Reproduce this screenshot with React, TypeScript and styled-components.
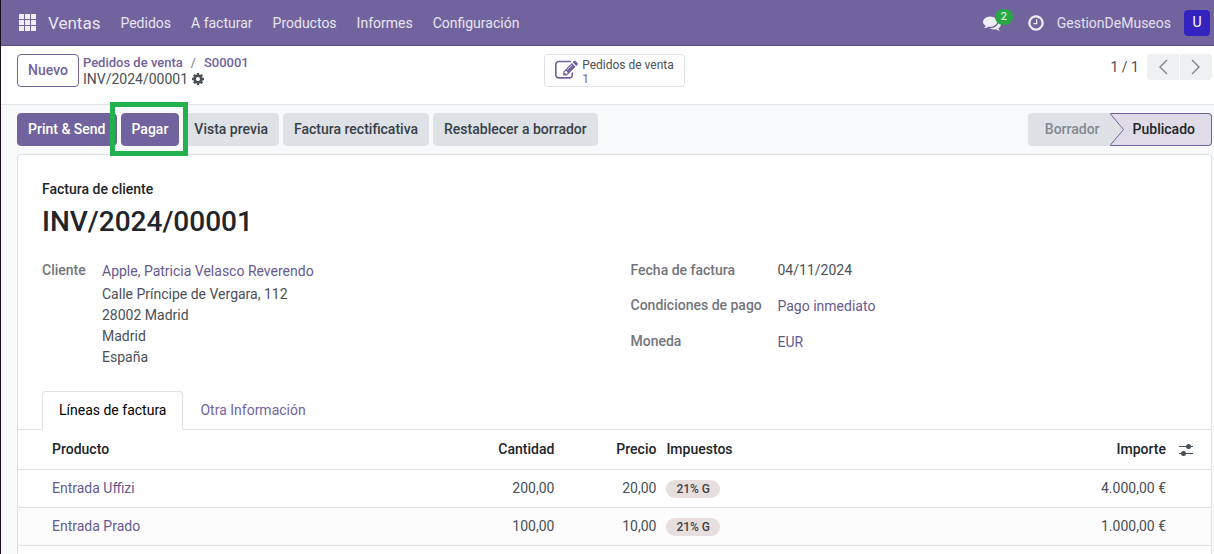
import React from "react";
import styled, { createGlobalStyle, css } from "styled-components";

const color = {
  brand: "#71639e",
  brandDark: "#5a4f7f",
  fieldLink: "#66598f",
  line: "#dee2e6",
  muted: "#f8f9fa",
  text: "#495057",
  strong: "#212529",
  label: "#73767b",
};

const GlobalStyle = createGlobalStyle`
  *, *::before, *::after { box-sizing: border-box; }
  html, body { height: 100%; }
  body {
    margin: 0;
    background: ${color.muted};
    color: ${color.text};
    font: 14px/21px Roboto, "Liberation Sans", sans-serif;
    overflow: hidden;
  }
  button { font: inherit; cursor: pointer; }
  a { color: ${color.brand}; text-decoration: none; }
`;

const Page = styled.div`
  min-height: 100vh;
  display: flex;
  flex-direction: column;
  border-left: 1px solid #1b0f1e;
`;

const Navbar = styled.header`
  display: flex;
  align-items: center;
  height: 46px;
  padding: 0 4px 0 18px;
  background: ${color.brand};
  border-bottom: 1px solid ${color.brandDark};
`;

const IconButton = styled.button`
  display: flex;
  padding: 0;
  border: 0;
  background: none;
  color: inherit;
`;

const Menu = styled.nav`
  display: flex;
  align-items: center;
  gap: 20px;
  margin-left: 12px;
  padding-top: 2px;
`;

const MenuLink = styled.a<{ $brand?: boolean }>`
  color: #e9e6f0;
  ${(p) => p.$brand && css`font-size: 17px;`}
`;

const Systray = styled.div`
  display: flex;
  align-items: center;
  margin-left: auto;
  color: #f0eef5;
`;

const Messages = styled(IconButton)`
  position: relative;
  margin-right: 26px;
`;

const Badge = styled.span`
  position: absolute;
  left: 12px;
  top: -5px;
  min-width: 18px;
  padding: 0 6px;
  border-radius: 8px;
  background: #28a745;
  color: #fff;
  font-size: 11px;
  line-height: 16px;
`;

const UserName = styled.span`
  margin: 0 13px 0 12px;
  padding-top: 2px;
  color: #e3e0ec;
`;

const Avatar = styled.button`
  width: 26px;
  height: 26px;
  padding: 0;
  border: 0;
  border-radius: 4px;
  background: #3324c0;
  color: #fff;
`;

const ControlPanel = styled.div`
  display: grid;
  grid-template-columns: 1fr auto 1fr;
  align-items: start;
  height: 59px;
  padding: 8px 2px 0 16px;
  background: #fff;
  border-bottom: 1px solid ${color.line};
`;

const Crumbs = styled.div`
  display: flex;
  gap: 4px;
`;

const Button = styled.button<{ $kind?: "primary" | "outline" }>`
  position: relative;
  height: 33px;
  padding: 0 10px;
  border: 1px solid ${color.line};
  border-radius: 4px;
  background: ${color.line};
  color: #374047;
  font-weight: 500;
  white-space: nowrap;
  ${(p) =>
    p.$kind === "primary" &&
    css`
      border-color: ${color.brand};
      background: ${color.brand};
      color: #fff;
    `}
  ${(p) =>
    p.$kind === "outline" &&
    css`
      border-color: ${color.brand};
      background: #fff;
      color: ${color.brand};
    `}
`;

const Trail = styled.nav`
  padding-top: 1px;
  line-height: 16px;
`;

const TrailPath = styled.div`
  display: flex;
  gap: 8px;
  font-size: 13px;
  font-weight: 500;
  color: #868c92;
`;

const TrailCurrent = styled.div`
  display: flex;
  align-items: center;
  gap: 3px;
  color: ${color.text};
`;

const StatButton = styled.button`
  display: flex;
  align-items: center;
  gap: 4px;
  height: 33px;
  padding: 0 10px;
  border: 1px solid ${color.line};
  border-radius: 4px;
  background: #fff;
  color: ${color.brand};
  font-size: 12px;
  line-height: 14px;
  text-align: left;
`;

const StatText = styled.span`
  padding-top: 2px;
`;

const StatLabel = styled.span`
  display: block;
  color: ${color.text};
`;

const StatValue = styled.span`
  display: block;
`;

const Pager = styled.div`
  display: flex;
  align-items: center;
  justify-content: flex-end;
  gap: 1px;
`;

const PagerCount = styled.span`
  margin-right: 7px;
`;

const PagerButton = styled.button<{ $side: "left" | "right" }>`
  display: flex;
  align-items: center;
  justify-content: center;
  width: 32px;
  height: 26px;
  padding: 0;
  border: 0;
  border-radius: ${(p) => (p.$side === "left" ? "4px 0 0 4px" : "0 4px 4px 0")};
  background: #eef0f1;
  color: #7c8186;
`;

const StatusBar = styled.div`
  display: flex;
  gap: 4px;
  padding: 8px 2px 8px 16px;
`;

const HighlightFrame = styled.span`
  position: absolute;
  z-index: 1;
  inset: -12px -10px -11px -12px;
  border: 5px solid #22b14c;
  pointer-events: none;
`;

const Steps = styled.div`
  display: flex;
  margin-left: auto;
`;

const Step = styled.button<{ $current?: boolean }>`
  position: relative;
  height: 33px;
  padding: 0 10px 0 16px;
  border: 1px solid ${color.line};
  border-right: 0;
  border-radius: 4px 0 0 4px;
  background: ${color.line};
  color: #83888e;
  font-weight: 500;
  ${(p) =>
    p.$current &&
    css`
      padding: 0 16px 0 23px;
      border: 1px solid ${color.brand};
      border-left: 0;
      border-radius: 0 4px 4px 0;
      background: #dfdbe8;
      color: ${color.strong};
    `}
`;

const StepArrow = styled.svg`
  position: absolute;
  left: 0;
  top: -1px;
`;

const Sheet = styled.main`
  flex: 1;
  margin: 0 2px 0 16px;
  padding-top: 24px;
  border: 1px solid ${color.line};
  border-bottom: 0;
  border-radius: 4px 4px 0 0;
  background: #fff;
`;

const SheetHead = styled.div`
  padding: 0 24px;
  color: ${color.strong};
  font-weight: 500;
`;

const Title = styled.h1`
  margin: 5px 0 21px;
  font-size: 28px;
  line-height: 34px;
  font-weight: 500;
`;

const Groups = styled.div`
  display: grid;
  grid-template-columns: 1fr 1fr;
  gap: 32px;
  height: 131px;
  padding: 0 24px;
`;

const Fields = styled.dl<{ $label: number }>`
  display: grid;
  grid-template-columns: ${(p) => p.$label}px 1fr;
  align-content: start;
  row-gap: 14px;
  margin: 0;
  a { color: ${color.fieldLink}; }
`;

const Label = styled.dt`
  color: ${color.label};
  font-weight: 500;
`;

const Value = styled.dd<{ $link?: boolean }>`
  margin: 0;
  ${(p) => p.$link && css`padding-top: 1px;`}
`;

const Address = styled.address`
  margin-top: 2px;
  font-style: normal;
`;

const Tabs = styled.div`
  display: flex;
  padding: 0 24px;
  border-bottom: 1px solid ${color.line};
`;

const Tab = styled.button<{ $active?: boolean }>`
  height: 39px;
  margin-bottom: -1px;
  padding: 0 16px;
  border: 1px solid transparent;
  border-radius: 4px 4px 0 0;
  background: none;
  color: ${color.brand};
  ${(p) =>
    p.$active &&
    css`
      border-color: ${color.line} ${color.line} #fff;
      background: #fff;
      color: #000;
    `}
`;

const Lines = styled.table`
  width: 100%;
  table-layout: fixed;
  border-collapse: separate;
  border-spacing: 0;
  a { color: ${color.fieldLink}; }
`;

const Column = styled.col<{ $width?: string }>`
  width: ${(p) => p.$width ?? "auto"};
`;

const cell = css<{ $end?: boolean }>`
  padding: 0 5px;
  border-bottom: 1px solid ${color.line};
  text-align: ${(p) => (p.$end ? "right" : "left")};
  &:first-child { padding-left: 34px; }
`;

const HeadCell = styled.th<{ $end?: boolean }>`
  ${cell}
  height: 40px;
  color: ${color.strong};
  font-weight: 500;
`;

const OptionsCell = styled(HeadCell)`
  padding-left: 7px;
  color: ${color.text};
`;

const Cell = styled.td<{ $end?: boolean }>`
  ${cell}
  height: 38px;
  tr:nth-child(even) > & { background: #fcfcfc; }
`;

const Tag = styled.span`
  display: inline-block;
  padding: 0 10px;
  border-radius: 9px;
  background: #e6dfde;
  color: #3f3f44;
  font-size: 12px;
  line-height: 18px;
  font-weight: 500;
  vertical-align: middle;
`;

const Glyph = ({ d, size }: { d: string; size: number }) => (
  <svg width={size} height={size} viewBox="0 0 1792 1792" fill="currentColor" aria-hidden="true">
    <path d={d} />
  </svg>
);

const cog =
  "M1152 896q0-106-75-181t-181-75-181 75-75 181 75 181 181 75 181-75 75-181zm512-109v222q0 12-8 23t-20 13l-185 28q-19 54-39 91 35 50 107 138 10 12 10 25t-9 23q-27 37-99 108t-94 71q-12 0-26-9l-138-108q-44 23-91 38-16 136-29 186-7 28-36 28h-222q-14 0-24.5-8.5t-11.5-21.5l-28-184q-49-16-90-37l-141 107q-10 9-25 9-14 0-25-11-126-114-165-168-7-10-7-23 0-12 8-23 15-21 51-66.5t54-70.5q-27-50-41-99l-183-27q-13-2-21-12.5t-8-23.5v-222q0-12 8-23t19-13l186-28q14-46 39-92-40-57-107-138-10-12-10-24 0-10 9-23 26-36 98.5-107.5t94.5-71.5q13 0 26 10l138 107q44-23 91-38 16-136 29-186 7-28 36-28h222q14 0 24.5 8.5t11.5 21.5l28 184q49 16 90 37l142-107q9-9 24-9 13 0 25 10 129 119 165 170 7 8 7 22 0 12-8 23-15 21-51 66.5t-54 70.5q26 50 41 98l183 28q13 2 21 12.5t8 23.5z";
const comments =
  "M1408 768q0 139-94 257t-256.5 186.5-353.5 68.5q-86 0-176-16-124 88-278 128-36 9-86 16h-3q-11 0-20.5-8t-11.5-21q-1-3-1-6.5t.5-6.5 2-6l2.5-5 3.5-5.5 4-5 4.5-5 4-4.5q5-6 23-25t26-29.5 22.5-29 25-38.5 20.5-44q-124-72-195-177t-71-224q0-139 94-257t256.5-186.5 353.5-68.5 353.5 68.5 256.5 186.5 94 257zm384 256q0 120-71 224.5t-195 176.5q10 24 20.5 44t25 38.5 22.5 29 26 29.5 23 25q1 1 4 4.5t4.5 5 4 5 3.5 5.5l2.5 5 2 6 .5 6.5-1 6.5q-3 14-13 22t-22 7q-50-7-86-16-154-40-278-128-90 16-176 16-271 0-472-132 58 4 88 4 161 0 309-45t264-129q125-92 192-212t67-254q0-77-23-152 129 71 204 178t75 230z";
const clock =
  "M1024 544v448q0 14-9 23t-23 9h-320q-14 0-23-9t-9-23v-64q0-14 9-23t23-9h224v-352q0-14 9-23t23-9h64q14 0 23 9t9 23zm416 352q0-148-73-273t-198-198-273-73-273 73-198 198-73 273 73 273 198 198 273 73 273-73 198-198 73-273zm224 0q0 209-103 385.5t-279.5 279.5-385.5 103-385.5-103-279.5-279.5-103-385.5 103-385.5 279.5-279.5 385.5-103 385.5 103 279.5 279.5 103 385.5z";
const pencil =
  "M888 1184l116-116-152-152-116 116v56h96v96h56zm440-720q-16-16-33 1l-350 350q-17 17-1 33t33-1l350-350q17-17 1-33zm80 594v190q0 119-84.5 203.5t-203.5 84.5h-832q-119 0-203.5-84.5t-84.5-203.5v-832q0-119 84.5-203.5t203.5-84.5h832q63 0 117 25 15 7 18 23 3 17-9 29l-49 49q-14 14-32 8-23-6-45-6h-832q-66 0-113 47t-47 113v832q0 66 47 113t113 47h832q66 0 113-47t47-113v-126q0-13 9-22l64-64q15-15 35-7t20 29zm-96-738l288 288-672 672h-288v-288zm444 132l-92 92-288-288 92-92q28-28 68-28t68 28l152 152q28 28 28 68t-28 68z";

const AppsIcon = () => (
  <svg width="17" height="17" viewBox="0 0 17 17" fill="#f0eef5" aria-hidden="true">
    {[0, 6, 12].map((y) => [0, 6, 12].map((x) => <rect key={`${x}-${y}`} x={x} y={y} width="5" height="5" />))}
  </svg>
);

const Chevron = ({ points }: { points: string }) => (
  <svg width="14" height="16" viewBox="0 0 14 16" fill="none" stroke="currentColor" strokeWidth="1.3" aria-hidden="true">
    <polyline points={points} />
  </svg>
);

const SlidersIcon = () => (
  <svg width="16" height="14" viewBox="0 0 16 14" fill="currentColor" aria-hidden="true">
    <path d="M1 3h14v1H1zM1 10h14v1H1z" />
    <circle cx="10.5" cy="3.5" r="2.5" />
    <circle cx="5.5" cy="10.5" r="2.5" />
  </svg>
);

const menu = ["Pedidos", "A facturar", "Productos", "Informes", "Configuración"];

const lines = [
  { product: "Entrada Uffizi", quantity: "200,00", price: "20,00", tax: "21% G", amount: "4.000,00 €" },
  { product: "Entrada Prado", quantity: "100,00", price: "10,00", tax: "21% G", amount: "1.000,00 €" },
];

export default function App() {
  return (
    <Page>
      <GlobalStyle />
      <Navbar>
        <IconButton aria-label="Aplicaciones">
          <AppsIcon />
        </IconButton>
        <Menu>
          <MenuLink href="#" $brand>Ventas</MenuLink>
          {menu.map((item) => (
            <MenuLink href="#" key={item}>{item}</MenuLink>
          ))}
        </Menu>
        <Systray>
          <Messages aria-label="Conversaciones">
            <Glyph d={comments} size={18} />
            <Badge>2</Badge>
          </Messages>
          <IconButton aria-label="Actividades">
            <Glyph d={clock} size={18} />
          </IconButton>
          <UserName>GestionDeMuseos</UserName>
          <Avatar>U</Avatar>
        </Systray>
      </Navbar>

      <ControlPanel>
        <Crumbs>
          <Button $kind="outline">Nuevo</Button>
          <Trail>
            <TrailPath>
              <a href="#">Pedidos de venta</a>
              <span>/</span>
              <a href="#">S00001</a>
            </TrailPath>
            <TrailCurrent>
              INV/2024/00001
              <IconButton aria-label="Acciones">
                <Glyph d={cog} size={14} />
              </IconButton>
            </TrailCurrent>
          </Trail>
        </Crumbs>
        <StatButton>
          <Glyph d={pencil} size={23} />
          <StatText>
            <StatLabel>Pedidos de venta</StatLabel>
            <StatValue>1</StatValue>
          </StatText>
        </StatButton>
        <Pager>
          <PagerCount>1 / 1</PagerCount>
          <PagerButton $side="left" aria-label="Anterior">
            <Chevron points="11,1 4,8 11,15" />
          </PagerButton>
          <PagerButton $side="right" aria-label="Siguiente">
            <Chevron points="3,1 10,8 3,15" />
          </PagerButton>
        </Pager>
      </ControlPanel>

      <StatusBar>
        <Button $kind="primary">Print &amp; Send</Button>
        <Button $kind="primary">
          Pagar
          <HighlightFrame />
        </Button>
        <Button>Vista previa</Button>
        <Button>Factura rectificativa</Button>
        <Button>Restablecer a borrador</Button>
        <Steps>
          <Step>Borrador</Step>
          <Step $current>
            <StepArrow width="14" height="33" viewBox="0 0 14 33" aria-hidden="true">
              <path d="M0 0L13.500 16.500L0 33z" fill={color.line} />
              <path d="M0 0.500L13.500 16.500L0 32.500" fill="none" stroke={color.brand} />
            </StepArrow>
            Publicado
          </Step>
        </Steps>
      </StatusBar>

      <Sheet>
        <SheetHead>
          Factura de cliente
          <Title>INV/2024/00001</Title>
        </SheetHead>
        <Groups>
          <Fields $label={60}>
            <Label>Cliente</Label>
            <Value $link>
              <a href="#">Apple, Patricia Velasco Reverendo</a>
              <Address>
                Calle Príncipe de Vergara, 112<br />
                28002 Madrid<br />
                Madrid<br />
                España
              </Address>
            </Value>
          </Fields>
          <Fields $label={147}>
            <Label>Fecha de factura</Label>
            <Value>04/11/2024</Value>
            <Label>Condiciones de pago</Label>
            <Value $link><a href="#">Pago inmediato</a></Value>
            <Label>Moneda</Label>
            <Value $link><a href="#">EUR</a></Value>
          </Fields>
        </Groups>
        <Tabs role="tablist">
          <Tab role="tab" aria-selected="true" $active>Líneas de factura</Tab>
          <Tab role="tab" aria-selected="false">Otra Información</Tab>
        </Tabs>
        <Lines>
          <colgroup>
            <Column $width="37%" />
            <Column $width="100px" />
            <Column $width="102px" />
            <Column />
            <Column $width="120px" />
            <Column $width="40px" />
          </colgroup>
          <thead>
            <tr>
              <HeadCell>Producto</HeadCell>
              <HeadCell $end>Cantidad</HeadCell>
              <HeadCell $end>Precio</HeadCell>
              <HeadCell>Impuestos</HeadCell>
              <HeadCell $end>Importe</HeadCell>
              <OptionsCell>
                <IconButton aria-label="Columnas opcionales"><SlidersIcon /></IconButton>
              </OptionsCell>
            </tr>
          </thead>
          <tbody>
            {lines.map((line) => (
              <tr key={line.product}>
                <Cell><a href="#">{line.product}</a></Cell>
                <Cell $end>{line.quantity}</Cell>
                <Cell $end>{line.price}</Cell>
                <Cell><Tag>{line.tax}</Tag></Cell>
                <Cell $end>{line.amount}</Cell>
                <Cell />
              </tr>
            ))}
          </tbody>
        </Lines>
      </Sheet>
    </Page>
  );
}
